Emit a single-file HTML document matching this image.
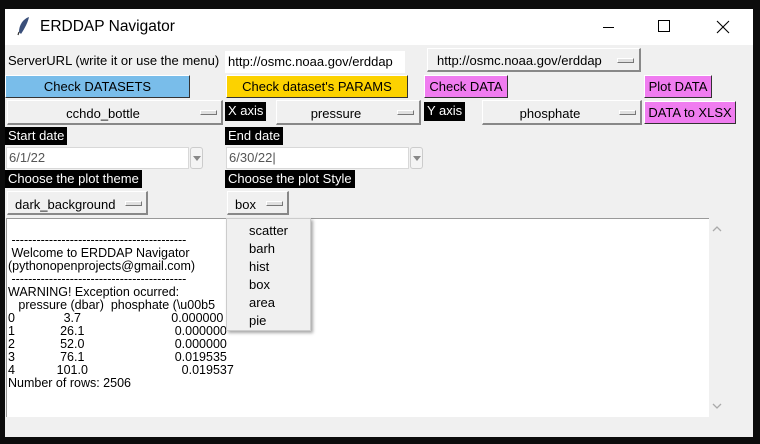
<!DOCTYPE html>
<html><head><style>
*{margin:0;padding:0;box-sizing:border-box}
body{width:760px;height:444px;background:#0c0c0c;position:relative;overflow:hidden;font-family:"Liberation Sans",sans-serif;font-size:13px;color:#000}
.a{position:absolute;white-space:nowrap}
.win{left:5px;top:9px;width:748px;height:428px;background:#f0f0f0}
.tb{left:5px;top:9px;width:748px;height:36px;background:#fff}
.btn{border:1px solid #fff;border-right-color:#777;border-bottom-color:#777;display:flex;align-items:center;justify-content:center}
.opt{background:#f0f0f0;border:1px solid #fff;border-right:2px solid #888;border-bottom:2px solid #888}
.ind{position:absolute;width:17px;height:5px;border:1px solid #fff;border-right-color:#777;border-bottom-color:#777;background:#e0e0e0}
.blk{background:#000;color:#fff;padding:0 3px;line-height:18px}
.ent{background:#fff;border:1px solid #d8d8d8;padding-left:2px;line-height:20px;color:#555}
.arr{border:1px solid #ccc;border-radius:3px;background:#f4f4f4}
.t{line-height:13px;font-size:12.5px}
</style></head><body>
<div class="a win"></div>
<div class="a tb"></div>
<svg class="a" style="left:16px;top:16px" width="16" height="20"><path d="M13 1 C7 3 3 9 3 16 L5 18 C9 12 12 6 13 1Z" fill="#3a4f7a"/><path d="M3 16 L2 19" stroke="#333" stroke-width="1.2"/></svg>
<div class="a" style="left:40px;top:18px;font-size:15.5px">ERDDAP Navigator</div>
<div class="a" style="left:603px;top:27px;width:11px;height:1px;background:#000"></div>
<div class="a" style="left:658px;top:20px;width:12px;height:12px;border:1px solid #000"></div>
<svg class="a" style="left:716px;top:20px" width="14" height="14"><path d="M1 1L13 13M13 1L1 13" stroke="#000" stroke-width="1.1"/></svg>

<div class="a" style="left:8px;top:53px">ServerURL (write it or use the menu)</div>
<div class="a ent" style="left:225px;top:51px;width:180px;color:#000;border-color:#fff">http://osmc.noaa.gov/erddap</div>
<div class="a opt" style="left:427px;top:48px;width:214px;height:24px"><span class="a" style="left:9px;top:4px">http://osmc.noaa.gov/erddap</span><span class="ind" style="left:189px;top:9px"></span></div>

<div class="a btn" style="left:5px;top:75px;width:185px;height:23px;background:#79bdea;border-right:1px solid #333;border-bottom:1px solid #333">Check DATASETS</div>
<div class="a btn" style="left:226px;top:75px;width:182px;height:23px;background:#fcd200;border-right:1px solid #333;border-bottom:1px solid #333">Check dataset's PARAMS</div>
<div class="a btn" style="left:424px;top:75px;width:84px;height:23px;background:#f07cf0;border-right:1px solid #333;border-bottom:1px solid #333">Check DATA</div>
<div class="a btn" style="left:644px;top:75px;width:68px;height:23px;background:#f07cf0;border-right:1px solid #333;border-bottom:1px solid #333">Plot DATA</div>

<div class="a opt" style="left:7px;top:100px;width:216px;height:25px"><span class="a" style="left:0;width:190px;text-align:center;top:5px">cchdo_bottle</span><span class="ind" style="left:192px;top:9px"></span></div>
<div class="a blk" style="left:225px;top:102px;height:19px">X axis</div>
<div class="a opt" style="left:276px;top:100px;width:145px;height:25px"><span class="a" style="left:0;width:118px;text-align:center;top:5px">pressure</span><span class="ind" style="left:120px;top:9px"></span></div>
<div class="a blk" style="left:424px;top:102px;height:19px">Y axis</div>
<div class="a opt" style="left:482px;top:100px;width:160px;height:25px"><span class="a" style="left:0;width:134px;text-align:center;top:5px">phosphate</span><span class="ind" style="left:136px;top:9px"></span></div>
<div class="a btn" style="left:644px;top:101px;width:92px;height:23px;background:#f07cf0;border-right:1px solid #333;border-bottom:1px solid #333">DATA to XLSX</div>

<div class="a blk" style="left:5px;top:127px">Start date</div>
<div class="a blk" style="left:225px;top:127px">End date</div>
<div class="a ent" style="left:6px;top:147px;width:183px;height:22px">6/1/22</div>
<div class="a arr" style="left:190px;top:147px;width:13px;height:22px"><svg class="a" style="left:2px;top:8px" width="8" height="5"><path d="M0 0H8L4 5Z" fill="#888"/></svg></div>
<div class="a ent" style="left:226px;top:147px;width:183px;height:22px">6/30/22|</div>
<div class="a arr" style="left:410px;top:147px;width:13px;height:22px"><svg class="a" style="left:2px;top:8px" width="8" height="5"><path d="M0 0H8L4 5Z" fill="#888"/></svg></div>

<div class="a blk" style="left:5px;top:170px">Choose the plot theme</div>
<div class="a blk" style="left:225px;top:170px">Choose the plot Style</div>
<div class="a opt" style="left:7px;top:191px;width:141px;height:24px"><span class="a" style="left:7px;top:5px">dark_background</span><span class="ind" style="left:117px;top:9px"></span></div>
<div class="a opt" style="left:227px;top:191px;width:62px;height:24px"><span class="a" style="left:7px;top:5px">box</span><span class="ind" style="left:38px;top:9px"></span></div>

<div class="a" style="left:6px;top:218px;width:703px;height:199px;background:#fff;border-top:1px solid #999;border-left:1px solid #999"></div>
<div class="a t" style="left:8px;top:234px">&nbsp;------------------------------------------<br>&nbsp;Welcome to ERDDAP Navigator<br>(pythonopenprojects@gmail.com)<br>&nbsp;------------------------------------------<br>WARNING! Exception ocurred:<br></div>
<div class="a t" style="left:8px;top:299px;white-space:pre">   pressure (dbar)  phosphate (\u00b5
0              3.7                          0.000000
1             26.1                          0.000000
2             52.0                          0.000000
3             76.1                          0.019535
4            101.0                           0.019537
Number of rows: 2506</div>
<svg class="a" style="left:712px;top:226px" width="10" height="6"><path d="M1 5L5 1L9 5" stroke="#aaa" fill="none" stroke-width="1.3"/></svg>
<svg class="a" style="left:712px;top:403px" width="10" height="6"><path d="M1 1L5 5L9 1" stroke="#aaa" fill="none" stroke-width="1.3"/></svg>

<div class="a" style="left:226px;top:218px;width:85px;height:113px;background:#f0f0f0;border:1px solid #ccc;box-shadow:2px 2px 3px rgba(0,0,0,.35)">
<div class="a" style="left:22px;top:3px;line-height:18px">scatter<br>barh<br>hist<br>box<br>area<br>pie</div></div>
</body></html>
